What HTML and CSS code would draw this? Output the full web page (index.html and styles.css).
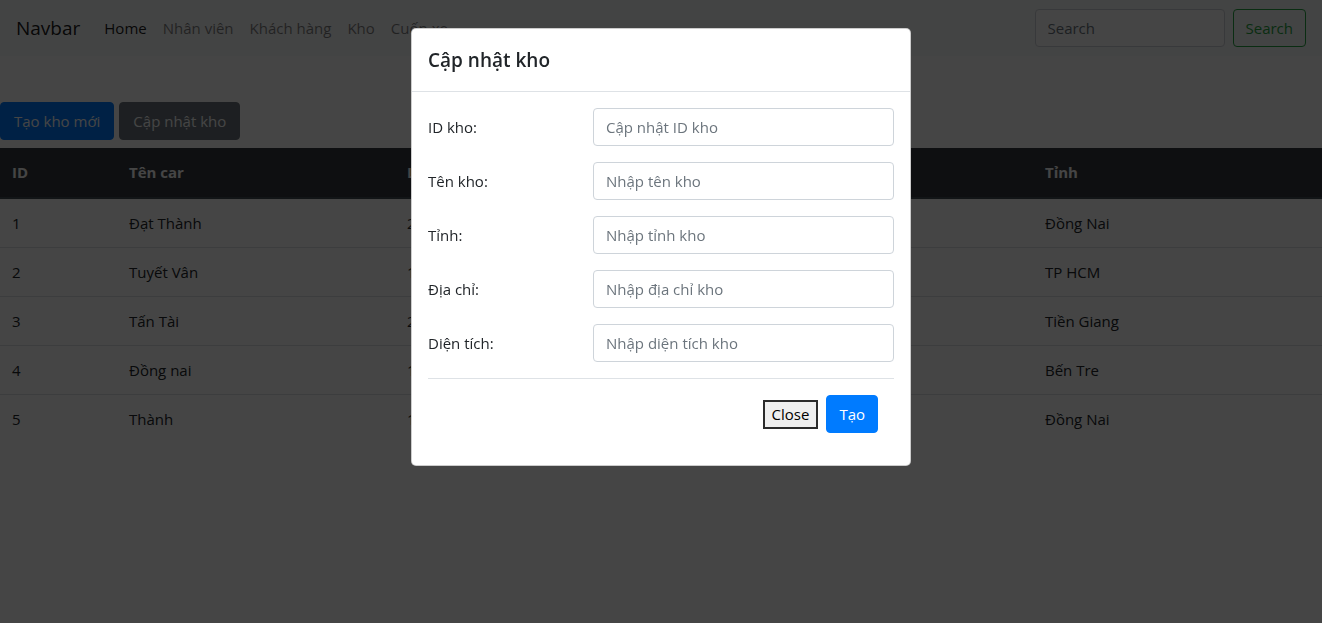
FILE: index.html
```html
<!DOCTYPE html>
<html lang="vi">
<head>
<meta charset="utf-8">
<title>Kho</title>
<link rel="stylesheet" href="styles.css">
</head>
<body>
<nav class="navbar">
  <a class="brand" href="#">Navbar</a>
  <ul class="nav-links">
    <li><a class="nav-link active" href="#">Home</a></li>
    <li><a class="nav-link" href="#">Nhân viên</a></li>
    <li><a class="nav-link" href="#">Khách hàng</a></li>
    <li><a class="nav-link" href="#">Kho</a></li>
    <li><a class="nav-link" href="#">Cuốn xe</a></li>
  </ul>
  <form class="search-form">
    <input class="form-control search-input" type="search" placeholder="Search">
    <button class="btn btn-outline-success" type="button">Search</button>
  </form>
</nav>

<main class="content">
  <div class="actions">
    <button class="btn btn-primary" type="button">Tạo kho mới</button>
    <button class="btn btn-secondary" type="button">Cập nhật kho</button>
  </div>
  <table class="table">
    <colgroup>
      <col class="c1"><col class="c2"><col class="c3"><col class="c4"><col class="c5">
    </colgroup>
    <thead>
      <tr><th>ID</th><th>Tên car</th><th>Loại</th><th></th><th>Tỉnh</th></tr>
    </thead>
    <tbody>
      <tr><td>1</td><td>Đạt Thành</td><td>2</td><td></td><td>Đồng Nai</td></tr>
      <tr><td>2</td><td>Tuyết Vân</td><td>1</td><td></td><td>TP HCM</td></tr>
      <tr><td>3</td><td>Tấn Tài</td><td>2</td><td></td><td>Tiền Giang</td></tr>
      <tr><td>4</td><td>Đồng nai</td><td>1</td><td></td><td>Bến Tre</td></tr>
      <tr><td>5</td><td>Thành</td><td>1</td><td></td><td>Đồng Nai</td></tr>
    </tbody>
  </table>
</main>

<div class="backdrop"></div>

<div class="modal">
  <div class="modal-content">
    <div class="modal-header">
      <h5 class="modal-title">Cập nhật kho</h5>
    </div>
    <form class="modal-body">
      <div class="form-row">
        <label class="col-label">ID kho:</label>
        <div class="col-input"><input class="form-control" type="text" placeholder="Cập nhật ID kho"></div>
      </div>
      <div class="form-row">
        <label class="col-label">Tên kho:</label>
        <div class="col-input"><input class="form-control" type="text" placeholder="Nhập tên kho"></div>
      </div>
      <div class="form-row">
        <label class="col-label">Tỉnh:</label>
        <div class="col-input"><input class="form-control" type="text" placeholder="Nhập tỉnh kho"></div>
      </div>
      <div class="form-row">
        <label class="col-label">Địa chỉ:</label>
        <div class="col-input"><input class="form-control" type="text" placeholder="Nhập địa chỉ kho"></div>
      </div>
      <div class="form-row">
        <label class="col-label">Diện tích:</label>
        <div class="col-input"><input class="form-control" type="text" placeholder="Nhập diện tích kho"></div>
      </div>
      <div class="modal-footer">
        <button class="btn-plain" type="button">Close</button>
        <button class="btn btn-primary" type="button">Tạo</button>
      </div>
    </form>
  </div>
</div>
</body>
</html>
```

FILE: styles.css
```css
* { box-sizing: border-box; }

html, body { height: 100%; }

body {
  margin: 0;
  font-family: "Open Sans", "Noto Sans", "Liberation Sans", sans-serif;
  font-size: 15px;
  line-height: 24px;
  color: #212529;
  background: #fff;
}

/* navbar */
.navbar {
  display: flex;
  align-items: center;
  padding: 8px 16px;
  height: 56px;
  background: #f8f9fa;
}
.brand {
  font-size: 19px;
  line-height: 30px;
  padding: 5px 0;
  margin-right: 16px;
  color: rgba(0,0,0,.9);
  text-decoration: none;
}
.nav-links {
  display: flex;
  list-style: none;
  margin: 0;
  padding: 0;
  flex: 1;
}
.nav-link {
  display: block;
  padding: 8px 8px;
  color: rgba(0,0,0,.5);
  text-decoration: none;
}
.nav-link.active { color: rgba(0,0,0,.9); }

.search-form {
  display: flex;
  align-items: center;
  gap: 8px;
}

/* form controls */
.form-control {
  display: block;
  width: 100%;
  height: 38px;
  padding: 6px 12px;
  font-family: inherit;
  font-size: 15px;
  line-height: 24px;
  color: #495057;
  background: #fff;
  border: 1px solid #ced4da;
  border-radius: 4px;
}
.form-control::placeholder { color: #6c757d; opacity: 1; }
.search-form .search-input {
  width: 190px;
  flex: 0 0 190px;
}

.btn {
  display: inline-block;
  height: 38px;
  padding: 6px 12px;
  font-family: inherit;
  font-size: 15px;
  line-height: 24px;
  border: 1px solid transparent;
  border-radius: 4px;
  cursor: pointer;
}
.btn-primary { background: #007bff; border-color: #007bff; color: #fff; }
.btn-secondary { background: #6c757d; border-color: #6c757d; color: #fff; }
.btn-outline-success { background: transparent; border-color: #28a745; color: #28a745; }

/* page content */
.content { padding-top: 46px; }
.actions {
  display: flex;
  gap: 5px;
  margin-bottom: 8px;
}
.actions .btn { padding: 6px 13px; }

.table {
  width: 100%;
  border-collapse: collapse;
  table-layout: fixed;
}
.c1 { width: 117px; }
.c2 { width: 278px; }
.c3 { width: 319px; }
.c4 { width: 319px; }
.table th, .table td {
  text-align: left;
  padding: 12px;
  vertical-align: top;
}
.table th {
  background: #343a40;
  color: #fff;
  font-weight: 700;
  height: 50px;
  border-bottom: 2px solid #454d55;
}
.table td {
  border-top: 1px solid #dee2e6;
}
.table tbody tr:first-child td { border-top: none; }
.table tbody tr td { height: 49px; }

/* overlay */
.backdrop {
  position: fixed;
  inset: 0;
  background: rgba(0,0,0,.73);
}

.modal {
  position: fixed;
  inset: 0;
  display: flex;
  justify-content: center;
  align-items: flex-start;
  padding-top: 28px;
}
.modal-content {
  width: 500px;
  background: #fff;
  border: 1px solid rgba(0,0,0,.2);
  border-radius: 5px;
}
.modal-header {
  padding: 16px;
  border-bottom: 1px solid #dee2e6;
}
.modal-title {
  margin: 0;
  font-size: 19px;
  line-height: 30px;
  font-weight: 600;
  color: #212529;
}
.modal-body {
  padding: 16px;
}
.form-row {
  display: grid;
  grid-template-columns: 165px 1fr;
  margin-bottom: 16px;
}
.col-label {
  padding-top: 7px;
  padding-bottom: 7px;
  line-height: 24px;
}
.col-input { min-width: 0; }

.modal-footer {
  display: flex;
  justify-content: flex-end;
  align-items: center;
  padding: 12px;
  border-top: 1px solid #dee2e6;
}
.modal-footer > * { margin: 4px; }

.btn-plain {
  height: 29px;
  padding: 0 7px;
  font-family: inherit;
  font-size: 15px;
  line-height: 25px;
  color: #000;
  background: #efefef;
  border: 2px solid #2b2b2b;
  border-radius: 0;
}
```
